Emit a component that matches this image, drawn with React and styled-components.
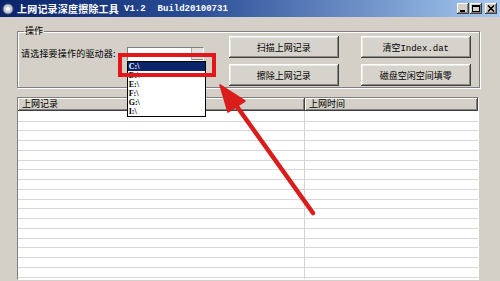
import React from 'react';
import styled, { createGlobalStyle } from 'styled-components';

const GlobalStyle = createGlobalStyle`
  html, body {
    margin: 0;
    padding: 0;
    background: #d4d0c8;
    overflow: hidden;
  }
  * {
    box-sizing: border-box;
  }
`;

const uiFont = `"Liberation Mono", "Noto Sans CJK SC", monospace`;

const Window = styled.div`
  position: relative;
  width: 500px;
  height: 281px;
  display: flex;
  flex-direction: column;
  background: #d4d0c8;
  font-family: ${uiFont};
  font-size: 9px;
  line-height: 10px;
  color: #000;
  overflow: hidden;
`;

const TitleBar = styled.div`
  height: 17px;
  flex-shrink: 0;
  display: flex;
  align-items: center;
  padding: 0 3px 0 2px;
  background: linear-gradient(to right, #0a246a 0%, #2c4f98 40%, #a6caf0 100%);
  color: #fff;
`;

const TitleIcon = styled.svg`
  width: 12px;
  height: 12px;
  margin-right: 3px;
  flex-shrink: 0;
`;

const TitleCn = styled.span`
  font-family: "Noto Sans CJK SC", sans-serif;
  font-weight: 700;
  font-size: 10px;
  letter-spacing: 0.2px;
`;

const TitleLatin = styled.span`
  font-family: "Liberation Mono", monospace;
  font-weight: 700;
  font-size: 9px;
  white-space: pre;
  margin-left: ${p => p.$gap}px;
`;

const Controls = styled.div`
  margin-left: auto;
  display: flex;
  gap: 1px;
`;

const CtrlButton = styled.div`
  width: 12px;
  height: 11px;
  background: #d4d0c8;
  display: flex;
  align-items: center;
  justify-content: center;
  margin-left: ${p => (p.$spaced ? 2 : 0)}px;
  box-shadow: inset -1px -1px #404040, inset 1px 1px #fff, inset -2px -2px #808080;
`;

const Body = styled.div`
  flex: 1;
  display: flex;
  flex-direction: column;
  padding: 0 20px 0 17px;
  min-height: 0;
`;

const GroupBox = styled.fieldset`
  margin: 9px 0 0 0;
  padding: 0 4px 1px 3px;
  border: 1px solid #808080;
  box-shadow: inset 1px 1px #fff, 1px 1px #fff;
  height: 62px;
  min-inline-size: 0;
  display: flex;
  align-items: flex-start;
`;

const Legend = styled.legend`
  padding: 0 1px;
  margin-left: 3px;
  font-family: "Noto Sans CJK SC", sans-serif;
  font-size: 9px;
  line-height: 10px;
`;

const DrivePicker = styled.div`
  display: flex;
  align-items: center;
  margin-top: 11px;
`;

const Label = styled.span`
  font-family: "Noto Sans CJK SC", sans-serif;
  white-space: nowrap;
  letter-spacing: 0.2px;
`;

const Combo = styled.div`
  position: relative;
  width: 77px;
  height: 14px;
  margin-left: 11px;
  background: #fff;
  border: 1px solid #808080;
  border-right-color: #fff;
  border-bottom-color: #fff;
  display: flex;
  justify-content: flex-end;
`;

const ComboArrow = styled.div`
  width: 12px;
  height: 12px;
  background: #e4e2dc;
  border-left: 1px solid #b0aca4;
  border-bottom: 1px solid #808080;
`;

const DropList = styled.ul`
  position: absolute;
  left: -1px;
  top: 13px;
  width: 79px;
  margin: 0;
  padding: 0;
  list-style: none;
  background: #fff;
  border: 1px solid #000;
  z-index: 2;
`;

const DropItem = styled.li`
  height: 9px;
  line-height: 9px;
  padding-left: 1px;
  font-family: "Liberation Serif", serif;
  font-weight: 700;
  font-size: 8px;
  background: ${p => (p.$active ? '#0a246a' : '#fff')};
  color: ${p => (p.$active ? '#fff' : '#000')};
`;

const ButtonGrid = styled.div`
  margin-left: 25px;
  display: grid;
  grid-template-columns: 110px 110px;
  grid-auto-rows: 22px;
  column-gap: 22px;
  row-gap: 6px;
`;

const Button = styled.button`
  font-family: ${uiFont};
  font-size: 9px;
  color: #000;
  background: #d6d3cc;
  border: none;
  padding: 0;
  box-shadow: inset -1px -1px #404040, inset 1px 1px #fff, inset -2px -2px #8c8a85, inset 2px 2px #ebe9e4;
`;

const ListView = styled.div`
  margin: 9px 1px 1px 0;
  flex: 1;
  display: flex;
  flex-direction: column;
  border: 1px solid #808080;
  border-right-color: #fff;
  border-bottom-color: #fff;
  background: #fff;
  min-height: 0;
`;

const HeaderRow = styled.div`
  display: grid;
  grid-template-columns: 287px 1fr;
  height: 13px;
  flex-shrink: 0;
`;

const HeaderCell = styled.div`
  background: #d4d0c8;
  font-family: "Noto Sans CJK SC", sans-serif;
  padding: 1px 0 0 4px;
  box-shadow: inset -1px -1px #404040, inset 1px 1px #fff, inset -2px -2px #808080;
`;

const Rows = styled.div`
  flex: 1;
  display: grid;
  grid-template-columns: 287px 1fr;
`;

const Column = styled.div`
  border-right: ${p => (p.$divider ? '1px solid #d4d4d4' : 'none')};
  background: repeating-linear-gradient(
    to bottom,
    #fff 0px,
    #fff 8.75px,
    #d8d8d8 8.75px,
    #d8d8d8 9.75px
  );
  background-position: 0 1px;
`;

const Highlight = styled.div`
  position: absolute;
  left: 118px;
  top: 53px;
  width: 98px;
  height: 24px;
  border: 4px solid #e3161c;
  pointer-events: none;
  z-index: 3;
`;

const ArrowLayer = styled.svg`
  position: absolute;
  left: 0;
  top: 0;
  width: 500px;
  height: 281px;
  pointer-events: none;
  z-index: 3;
`;

const drives = ['C:\\', 'D:\\', 'E:\\', 'F:\\', 'G:\\', 'I:\\'];

export default function App() {
  return (
    <>
      <GlobalStyle />
      <Window>
        <TitleBar>
          <TitleIcon viewBox="0 0 12 12">
            <circle cx="6" cy="6" r="5" fill="#c8ccd8" stroke="#5a6478" strokeWidth="1" />
            <circle cx="6" cy="6" r="2" fill="#fff" />
          </TitleIcon>
          <TitleCn>上网记录深度擦除工具</TitleCn>
          <TitleLatin $gap={5}>V1.2</TitleLatin>
          <TitleLatin $gap={12}>Build20100731</TitleLatin>
          <Controls>
            <CtrlButton>
              <svg width="8" height="7" viewBox="0 0 8 7"><rect x="1" y="5" width="5" height="2" fill="#000" /></svg>
            </CtrlButton>
            <CtrlButton>
              <svg width="8" height="7" viewBox="0 0 8 7"><rect x="0.5" y="0.5" width="7" height="6" fill="none" stroke="#000" /><rect x="0" y="0" width="8" height="2" fill="#000" /></svg>
            </CtrlButton>
            <CtrlButton $spaced>
              <svg width="8" height="7" viewBox="0 0 8 7"><path d="M1 0.5 L7 6.5 M7 0.5 L1 6.5" stroke="#000" strokeWidth="1.6" /></svg>
            </CtrlButton>
          </Controls>
        </TitleBar>

        <Body>
          <GroupBox>
            <Legend>操作</Legend>
            <DrivePicker>
              <Label>请选择要操作的驱动器:</Label>
              <Combo>
                <ComboArrow />
                <DropList>
                  {drives.map((d, i) => (
                    <DropItem key={d} $active={i === 0}>{d}</DropItem>
                  ))}
                </DropList>
              </Combo>
            </DrivePicker>
            <ButtonGrid>
              <Button>扫描上网记录</Button>
              <Button>清空Index.dat</Button>
              <Button>擦除上网记录</Button>
              <Button>磁盘空闲空间填零</Button>
            </ButtonGrid>
          </GroupBox>

          <ListView>
            <HeaderRow>
              <HeaderCell>上网记录</HeaderCell>
              <HeaderCell>上网时间</HeaderCell>
            </HeaderRow>
            <Rows>
              <Column $divider />
              <Column />
            </Rows>
          </ListView>
        </Body>

        <Highlight />
        <ArrowLayer viewBox="0 0 500 281">
          <line x1="313" y1="213" x2="233" y2="101" stroke="#d91c1c" strokeWidth="4.5" strokeLinecap="round" />
          <polygon points="220,85 245,101 228,112" fill="#d91c1c" stroke="#d91c1c" strokeWidth="1.5" strokeLinejoin="round" />
        </ArrowLayer>
      </Window>
    </>
  );
}
